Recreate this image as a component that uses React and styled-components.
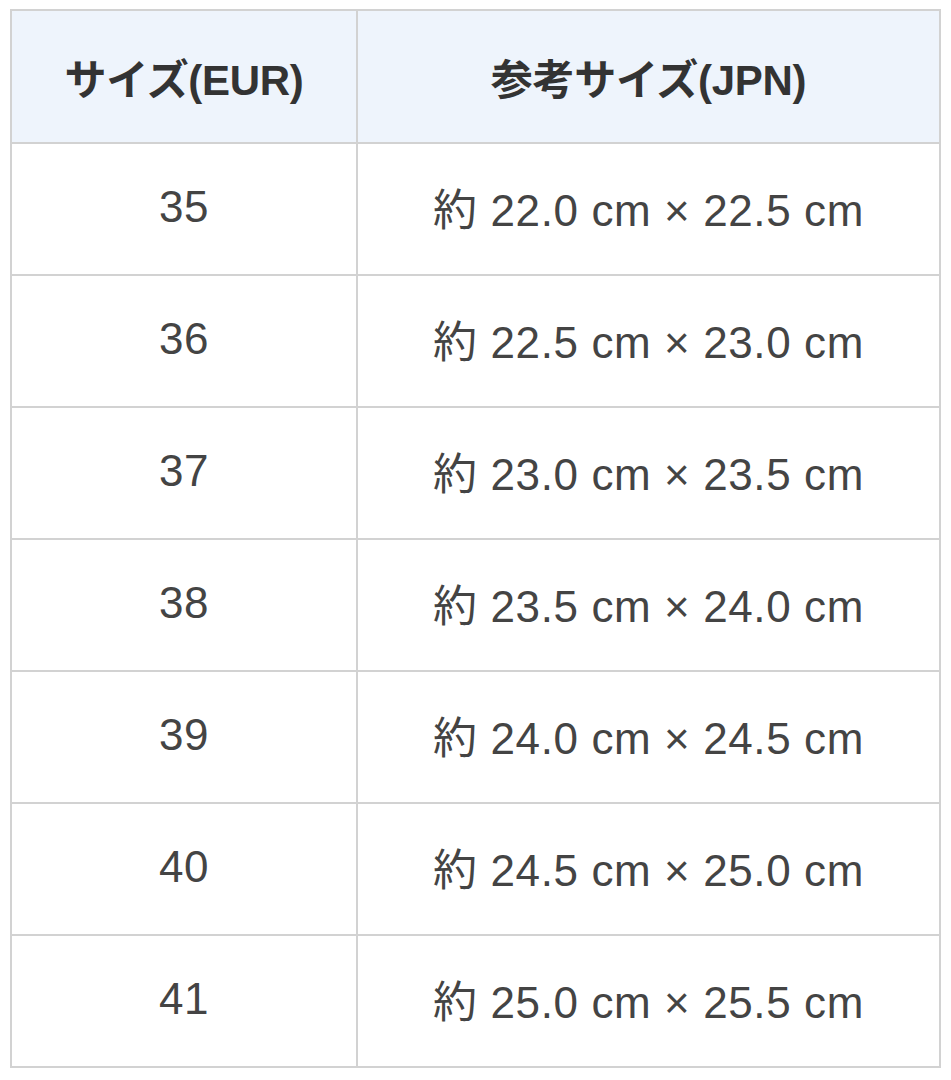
import React from 'react'
import styled, { createGlobalStyle } from 'styled-components'

const GlobalStyle = createGlobalStyle`
  body {
    margin: 0;
    background: #fff;
    font-family: "Liberation Sans", "Noto Sans CJK JP", sans-serif;
  }
`

const Page = styled.div`
  padding: 9px 10px;
`

const Table = styled.table`
  width: 931px;
  border-collapse: collapse;
  table-layout: fixed;
  border: 2px solid #d2d2d2;
`

const HeadCell = styled.th`
  height: 131px;
  padding: 0;
  background: #eef4fc;
  border: 2px solid #d2d2d2;
  color: #333;
  font-size: 42px;
  font-weight: 700;
  letter-spacing: -0.3px;
  text-align: center;
  vertical-align: middle;
  width: ${(p) => p.w || 'auto'};
`

const Cell = styled.td`
  height: 126px;
  padding: 0 0 4px;
  border: 2px solid #d2d2d2;
  color: #444;
  font-size: 44px;
  letter-spacing: 0.6px;
  text-align: center;
  vertical-align: middle;
`

const rows = [
  ['35', '約 22.0 cm × 22.5 cm'],
  ['36', '約 22.5 cm × 23.0 cm'],
  ['37', '約 23.0 cm × 23.5 cm'],
  ['38', '約 23.5 cm × 24.0 cm'],
  ['39', '約 24.0 cm × 24.5 cm'],
  ['40', '約 24.5 cm × 25.0 cm'],
  ['41', '約 25.0 cm × 25.5 cm'],
]

const App = () => {
  return (
    <Page>
      <GlobalStyle />
      <Table>
        <thead>
          <tr>
            <HeadCell w="344px">サイズ(EUR)</HeadCell>
            <HeadCell>参考サイズ(JPN)</HeadCell>
          </tr>
        </thead>
        <tbody>
          {rows.map(([eur, jpn]) => (
            <tr key={eur}>
              <Cell>{eur}</Cell>
              <Cell>{jpn}</Cell>
            </tr>
          ))}
        </tbody>
      </Table>
    </Page>
  )
}

export default App
